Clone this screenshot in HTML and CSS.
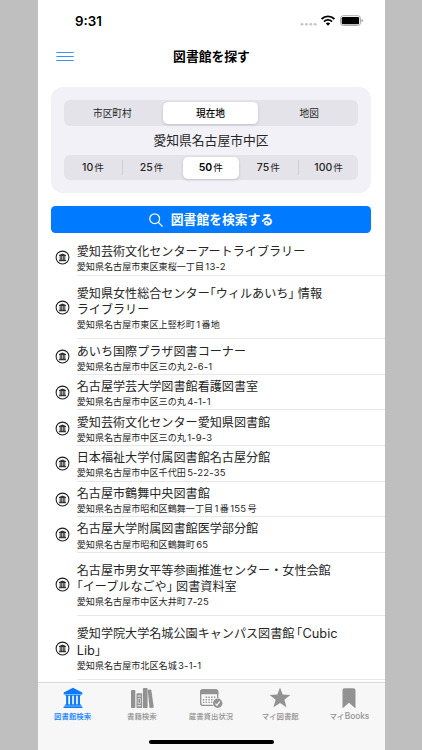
FILE: index.html
```html
<!DOCTYPE html>
<html lang="ja">
<head>
<meta charset="utf-8">
<title>図書館を探す</title>
<link rel="stylesheet" href="styles.css">
</head>
<body>
<svg width="0" height="0" class="defs">
  <symbol id="library" viewBox="0 0 15 15">
    <circle cx="7.500" cy="7.500" r="6.400" fill="none" stroke="#1c1c1c" stroke-width="1.050"/>
    <path d="M7.500 3.400L11 5.100V6H4V5.100zM4.700 6h1v4h-1zM6.200 6h1v4h-1zM7.800 6h1v4h-1zM9.300 6h1v4h-1zM4.200 9.800h6.600v.6H4.200zM3.900 10.500h7.200v.7H3.900z" fill="#333"/>
  </symbol>
</svg>
<div class="phone">
  <header class="status">
    <span class="time">9:31</span>
    <svg class="signals" width="64" height="14" viewBox="0 0 64 14">
      <g fill="#c4c4c4"><circle cx="2" cy="10.300" r="1.400"/><circle cx="6.400" cy="10.300" r="1.400"/><circle cx="10.800" cy="10.300" r="1.400"/><circle cx="15.200" cy="10.300" r="1.400"/></g>
      <g fill="none" stroke="#000" stroke-width="1.900"><path d="M21.600 5a9 9 0 0 1 12.800 0"/><path d="M24 7.600a5.600 5.600 0 0 1 8 0"/></g>
      <path d="M28 11.700l-2.200-2.200a3.100 3.100 0 0 1 4.400 0z"/>
      <rect x="40.500" y="1.700" width="20" height="9.800" rx="2.800" fill="#fff" stroke="#aaa"/>
      <rect x="41.700" y="2.900" width="17.400" height="7.400" rx="1.400"/>
      <path d="M61.500 4.900q1.400.5 1.400 1.700t-1.400 1.700z" fill="#999"/>
    </svg>
  </header>
  <nav class="navbar">
    <svg class="menu" width="18" height="10" viewBox="0 0 18 10"><path d="M.3 .5h17.400M.3 4.500h17.400M.3 8.500h17.400" stroke="#3d8ff0" stroke-width="1.100"/></svg>
    <h1>図書館を探す</h1>
  </nav>
  <section class="panel">
    <div class="segments places"><span>市区町村</span><span class="on">現在地</span><span>地図</span></div>
    <p class="place">愛知県名古屋市中区</p>
    <div class="segments counts"><span>10<i>件</i></span><span class="line">25<i>件</i></span><span class="on">50<i>件</i></span><span>75<i>件</i></span><span class="line">100<i>件</i></span></div>
  </section>
  <button class="search">
    <svg width="14" height="14" viewBox="0 0 14 14" fill="none" stroke="#fff" stroke-width="1.250" stroke-linecap="round"><circle cx="5.700" cy="5.700" r="4.900"/><path d="M9.400 9.400l3.800 3.800"/></svg>
    <span>図書館を検索する</span>
  </button>
  <ul class="list">
    <li><svg><use href="#library"/></svg><div><h2>愛知芸術文化センターアートライブラリー</h2><p>愛知県名古屋市東区東桜一丁目<b>13-2</b></p></div></li>
    <li class="tall"><svg><use href="#library"/></svg><div><h2>愛知県女性総合センター<em>「</em>ウィルあいち<em>」</em> 情報<br>ライブラリー</h2><p>愛知県名古屋市東区上竪杉町<b>1</b>番地</p></div></li>
    <li><svg><use href="#library"/></svg><div><h2>あいち国際プラザ図書コーナー</h2><p>愛知県名古屋市中区三の丸<b>2-6-1</b></p></div></li>
    <li><svg><use href="#library"/></svg><div><h2>名古屋学芸大学図書館看護図書室</h2><p>愛知県名古屋市中区三の丸<b>4-1-1</b></p></div></li>
    <li><svg><use href="#library"/></svg><div><h2>愛知芸術文化センター愛知県図書館</h2><p>愛知県名古屋市中区三の丸<b>1-9-3</b></p></div></li>
    <li><svg><use href="#library"/></svg><div><h2>日本福祉大学付属図書館名古屋分館</h2><p>愛知県名古屋市中区千代田<b>5-22-35</b></p></div></li>
    <li><svg><use href="#library"/></svg><div><h2>名古屋市鶴舞中央図書館</h2><p>愛知県名古屋市昭和区鶴舞一丁目<b>1</b>番<b>155</b>号</p></div></li>
    <li><svg><use href="#library"/></svg><div><h2>名古屋大学附属図書館医学部分館</h2><p>愛知県名古屋市昭和区鶴舞町<b>65</b></p></div></li>
    <li class="tall"><svg><use href="#library"/></svg><div><h2>名古屋市男女平等参画推進センター・女性会館<br><em>「</em>イーブルなごや<em>」</em> 図書資料室</h2><p>愛知県名古屋市中区大井町<b>7-25</b></p></div></li>
    <li class="tall"><svg><use href="#library"/></svg><div><h2>愛知学院大学名城公園キャンパス図書館<em class="wide">「</em><span class="latin">Cubic</span><br><span class="latin">Lib</span><em>」</em></h2><p>愛知県名古屋市北区名城<b>3-1-1</b></p></div></li>
  </ul>
  <footer class="tabs">
    <div class="tab active">
      <svg viewBox="0 0 22 22"><path d="M11 .8L20.300 5.400V7.600H1.700V5.400zM3.500 8.100h3.400v1h-.6v7.800h.6v1H3.500v-1h.6V9.100h-.6zM7.400 8.100h3.400v1h-.6v7.800h.6v1H7.400v-1h.6V9.100h-.6zM11.300 8.100h3.400v1h-.6v7.800h.6v1h-3.400v-1h.6V9.100h-.6zM15.200 8.100h3.400v1H18v7.800h.6v1h-3.400v-1h.6V9.100h-.6zM2.600 18.200h16.800v1H2.600zM1.600 19.500h18.800V21H1.600z"/></svg>
      <span>図書館検索</span>
    </div>
    <div class="tab">
      <svg viewBox="0 0 22 22"><rect x="0" y="3" width="4.300" height="18" rx=".8"/><path fill-rule="evenodd" d="M6.300 6.200h4a.8.8 0 0 1 .8.8v13.200a.8.8 0 0 1-.8.800h-4a.8.8 0 0 1-.8-.8V7a.8.8 0 0 1 .8-.8zM6.600 8.500v1h3.400v-1zM6.600 18.200v1h3.400v-1zM6.800 11.200v5.200h3v-5.200z"/><path d="M7.300 11.800h2v4h-2z"/><rect x="11.900" y="1" width="4.700" height="20" rx=".8"/><path d="M17.100 2.700l2.300-.3q.8 0 .9.700L22.700 20q0 .7-.6.800l-2.800.3q-.7 0-.8-.7L16.800 3.400q0-.5.3-.7z"/></svg>
      <span>書籍検索</span>
    </div>
    <div class="tab">
      <svg class="cal" viewBox="0 0 24 22"><rect x="1.700" y="3" width="17" height="15.300" rx="2" fill="none" stroke="currentColor" stroke-width="1.300"/><path d="M1.100 7.300V5q0-2.700 2.700-2.700h12.800q2.700 0 2.700 2.700v2.300z"/><path d="M6.700 10.200h10M3.900 12.800h12.800M3.900 15.400h10" fill="none" stroke="currentColor" stroke-width="1.400" stroke-dasharray="1.400 1.350"/><circle cx="18.700" cy="16.300" r="5.400" fill="#f7f7f7"/><circle cx="18.700" cy="16.300" r="4.700"/><path d="M16.500 16.600l1.500 1.700 2.800-3.900" fill="none" stroke="#fff" stroke-width="1.100"/></svg>
      <span>蔵書貸出状況</span>
    </div>
    <div class="tab">
      <svg viewBox="0 0 22 22"><path d="M11 .5l2.700 7.100 7.700.3-6 4.800 2.100 7.600-6.500-4.300-6.500 4.300 2.100-7.600L.6 7.900l7.700-.3z"/></svg>
      <span>マイ図書館</span>
    </div>
    <div class="tab">
      <svg viewBox="0 0 22 22"><path d="M4.500 3.300q0-2.100 2.100-2.100h8.800q2.100 0 2.100 2.100v17.300q-.1.800-.8.200L11 15.700l-5.700 5.100q-.7.600-.8-.2z"/></svg>
      <span>マイ<b>Books</b></span>
    </div>
    <div class="home"></div>
  </footer>
</div>
</body>
</html>
```
FILE: styles.css
```css
* { box-sizing: border-box; margin: 0; padding: 0; }
html, body { height: 100%; overflow: hidden; }
body {
  background: #bfbfbf;
  font-family: Inter, "Noto Sans CJK JP", sans-serif;
  color: #262626;
  text-spacing-trim: space-all;
}
.defs { position: absolute; }
.phone {
  width: 347px;
  height: 750px;
  margin-left: 38px;
  background: #fff;
  display: flex;
  flex-direction: column;
  overflow: hidden;
}
.status {
  height: 41px;
  flex: none;
  padding: 0 21px 0 37px;
  display: flex;
  align-items: center;
  justify-content: space-between;
}
.time { font-size: 13.300px; font-weight: 600; line-height: 16px; color: #000; }
.navbar {
  flex: none;
  height: 46.300px;
  padding: 0 18px;
  display: grid;
  grid-template-columns: 18px 1fr 18px;
  align-items: start;
}
.menu { margin-top: 11px; }
.navbar h1 {
  margin-top: 6px;
  font-size: 12.800px;
  font-weight: 600;
  line-height: 19px;
  text-align: center;
  color: #000;
}
.panel {
  flex: none;
  height: 105.500px;
  margin: 0 14px 0 13px;
  padding: 12.700px 13px 0;
  border-radius: 12px;
  background: #f2f1f8;
}
.segments {
  display: grid;
  height: 26px;
  padding: 1.700px;
  border-radius: 6px;
  background: #e4e3e9;
  font-size: 9.700px;
}
.segments span {
  display: flex;
  align-items: center;
  justify-content: center;
}
.segments .on {
  background: #fff;
  border-radius: 5px;
  box-shadow: 0 1px 3px rgba(0, 0, 0, .16);
  font-weight: 500;
  color: #000;
}
.places { grid-template-columns: 97.300px 95px 1fr; }
.places span:first-child { padding-right: 4px; }
.places span:last-child { padding-left: 4px; }
.counts {
  height: 25.500px;
  grid-template-columns: 56.500px 60.500px 56px 1fr 58.500px;
  font-size: 10.500px;
  font-weight: 500;
}
.counts i { font-style: normal; font-size: 9.600px; font-weight: 400; margin: -1px 0 0 1px; }
.counts span:first-child { padding-right: 2px; }
.counts span:last-child { padding-left: 3px; }
.counts .on { font-weight: 600; }
.counts .line { background: linear-gradient(#cfced6, #cfced6) 0 50% / 1px 15px no-repeat; }
.counts .line:nth-child(2) { padding-right: 2px; }
.place {
  height: 29px;
  line-height: 29px;
  font-size: 12.800px;
  text-align: center;
}
.search {
  flex: none;
  height: 27.500px;
  margin: 13.200px 14px 6.500px 13px;
  border: 0;
  border-radius: 4.500px;
  background: #007aff;
  color: #fff;
  font: 600 12.800px/20px Inter, "Noto Sans CJK JP", sans-serif;
  display: flex;
  align-items: center;
  justify-content: center;
  gap: 8px;
}
.list { flex: 1; min-height: 0; list-style: none; overflow: hidden; }
.list li {
  height: 35.600px;
  padding-left: 17px;
  display: flex;
  align-items: center;
}
.list .tall { height: 63.600px; }
.list li > svg { flex: none; width: 15px; height: 15px; }
.list li > div {
  align-self: stretch;
  flex: 1;
  margin-left: 6.700px;
  padding-top: 3.200px;
  border-bottom: 1px solid #e8e8e8;
  display: flex;
  flex-direction: column;
  justify-content: center;
  white-space: nowrap;
}
.list h2 { font-size: 12.100px; font-weight: 400; line-height: 16.600px; }
.list p { margin-top: .5px; font-size: 9.100px; line-height: 12px; }
.list p b { font-weight: 400; font-size: 9.500px; margin: 0 1.300px; letter-spacing: .2px; }
.list em { font-style: normal; font-feature-settings: "halt"; }
.list .wide { margin-left: 2px; }
.latin { font-size: 12.800px; }
.tabs {
  flex: none;
  position: relative;
  height: 68px;
  padding: 4px 1px 0 0;
  border-top: 1px solid #dcdcdc;
  background: #f7f7f7;
  display: grid;
  grid-template-columns: repeat(5, 1fr);
  color: #929292;
}
.tab { display: flex; flex-direction: column; align-items: center; }
.tab svg { width: 22px; height: 22px; fill: currentColor; overflow: visible; }
.tab .cal { width: 24px; }
.tab span { margin-top: 2px; font-size: 7.400px; line-height: 11px; font-weight: 500; white-space: nowrap; }
.tab b { font-size: 8.300px; font-weight: 500; margin-left: .5px; }
.active { color: #0a7aff; }
.home {
  position: absolute;
  left: 111px;
  bottom: 6.500px;
  width: 124.500px;
  height: 4px;
  border-radius: 2px;
  background: #000;
}
```
